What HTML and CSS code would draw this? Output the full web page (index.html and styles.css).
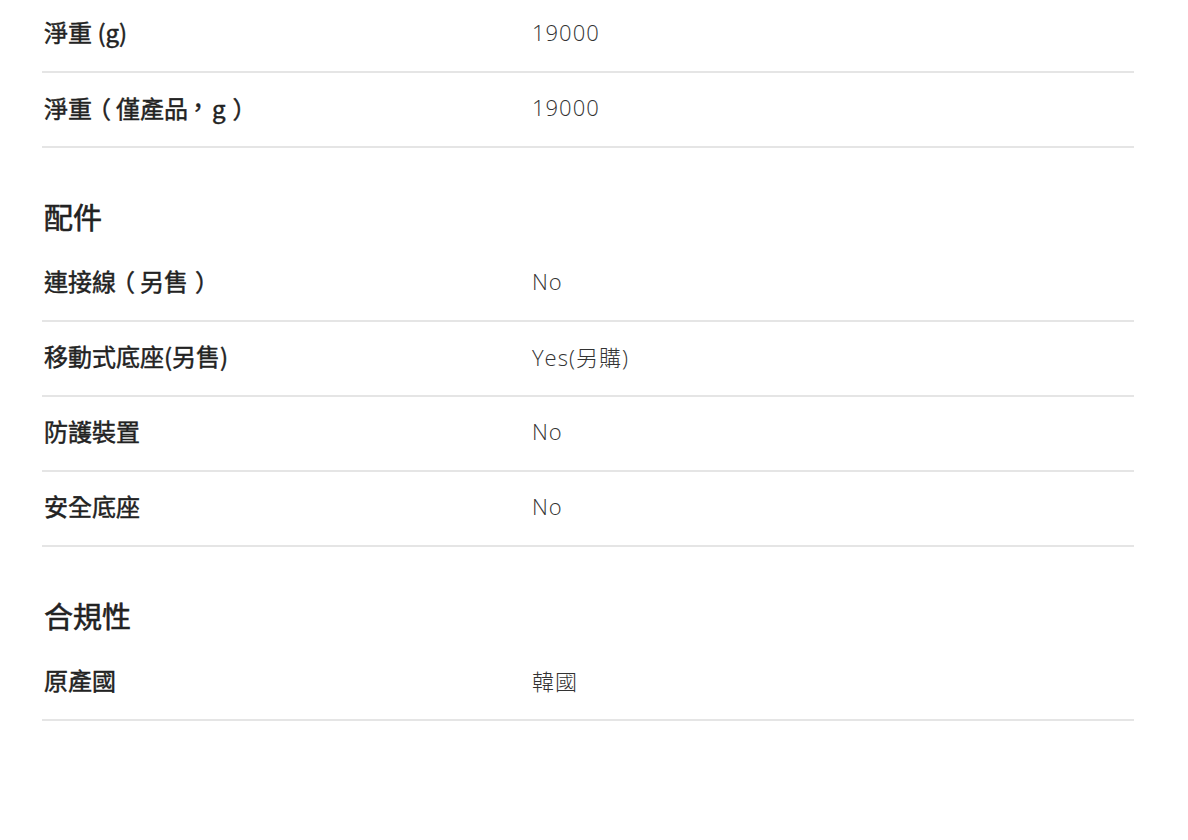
FILE: index.html
```html
<!DOCTYPE html>
<html lang="zh-Hant">
<head>
<meta charset="utf-8">
<title>規格</title>
<link rel="stylesheet" href="styles.css">
</head>
<body>
<div class="specs">
  <div class="group">
    <div class="row"><div class="label">淨重 (g)</div><div class="value">19000</div></div>
    <div class="row"><div class="label">淨重<span class="po">（</span>僅產品<span class="cm">，</span>g<span class="pc">）</span></div><div class="value">19000</div></div>
  </div>
  <div class="group">
    <h2 class="heading">配件</h2>
    <div class="row"><div class="label">連接線<span class="po">（</span>另售<span class="pc">）</span></div><div class="value">No</div></div>
    <div class="row"><div class="label">移動式底座(另售)</div><div class="value">Yes(另購)</div></div>
    <div class="row"><div class="label">防護裝置</div><div class="value">No</div></div>
    <div class="row"><div class="label">安全底座</div><div class="value">No</div></div>
  </div>
  <div class="group">
    <h2 class="heading">合規性</h2>
    <div class="row"><div class="label">原產國</div><div class="value">韓國</div></div>
  </div>
</div>
</body>
</html>
```
FILE: styles.css
```css
html, body {
  margin: 0;
  padding: 0;
  background: #fff;
}
body {
  font-family: "Open Sans", "Noto Sans CJK TC", sans-serif;
  color: #222;
}
.specs {
  width: 1092px;
  margin: -2px 0 0 42px;
}
.group + .group {
  padding-top: 51px;
}
.heading {
  margin: 0 0 8px 2px;
  height: 40px;
  line-height: 34px;
  font-family: "Noto Sans CJK TC", sans-serif;
  font-size: 29px;
  font-weight: 400;
  -webkit-text-stroke: 0.6px #222;
  color: #222;
}
.row {
  display: grid;
  grid-template-columns: 490px 1fr;
  height: 67px;
  padding-bottom: 6px;
  align-items: center;
  border-bottom: 2px solid #e5e5e5;
}
.label {
  padding-left: 2px;
  font-family: "Noto Sans CJK TC", sans-serif;
  font-size: 24px;
  font-weight: 400;
  -webkit-text-stroke: 0.45px #222;
  color: #222;
}
.po, .pc, .cm {
  font-feature-settings: "halt";
}
.po {
  padding: 0 5px 0 7px;
}
.pc {
  padding: 0 6px 0 7px;
}
.cm {
  padding: 0 8px 0 4px;
  vertical-align: 2px;
}
.value {
  font-family: "Open Sans", "Noto Sans CJK TC", sans-serif;
  font-size: 22px;
  font-weight: 300;
  letter-spacing: 1px;
  color: #333;
}
```
